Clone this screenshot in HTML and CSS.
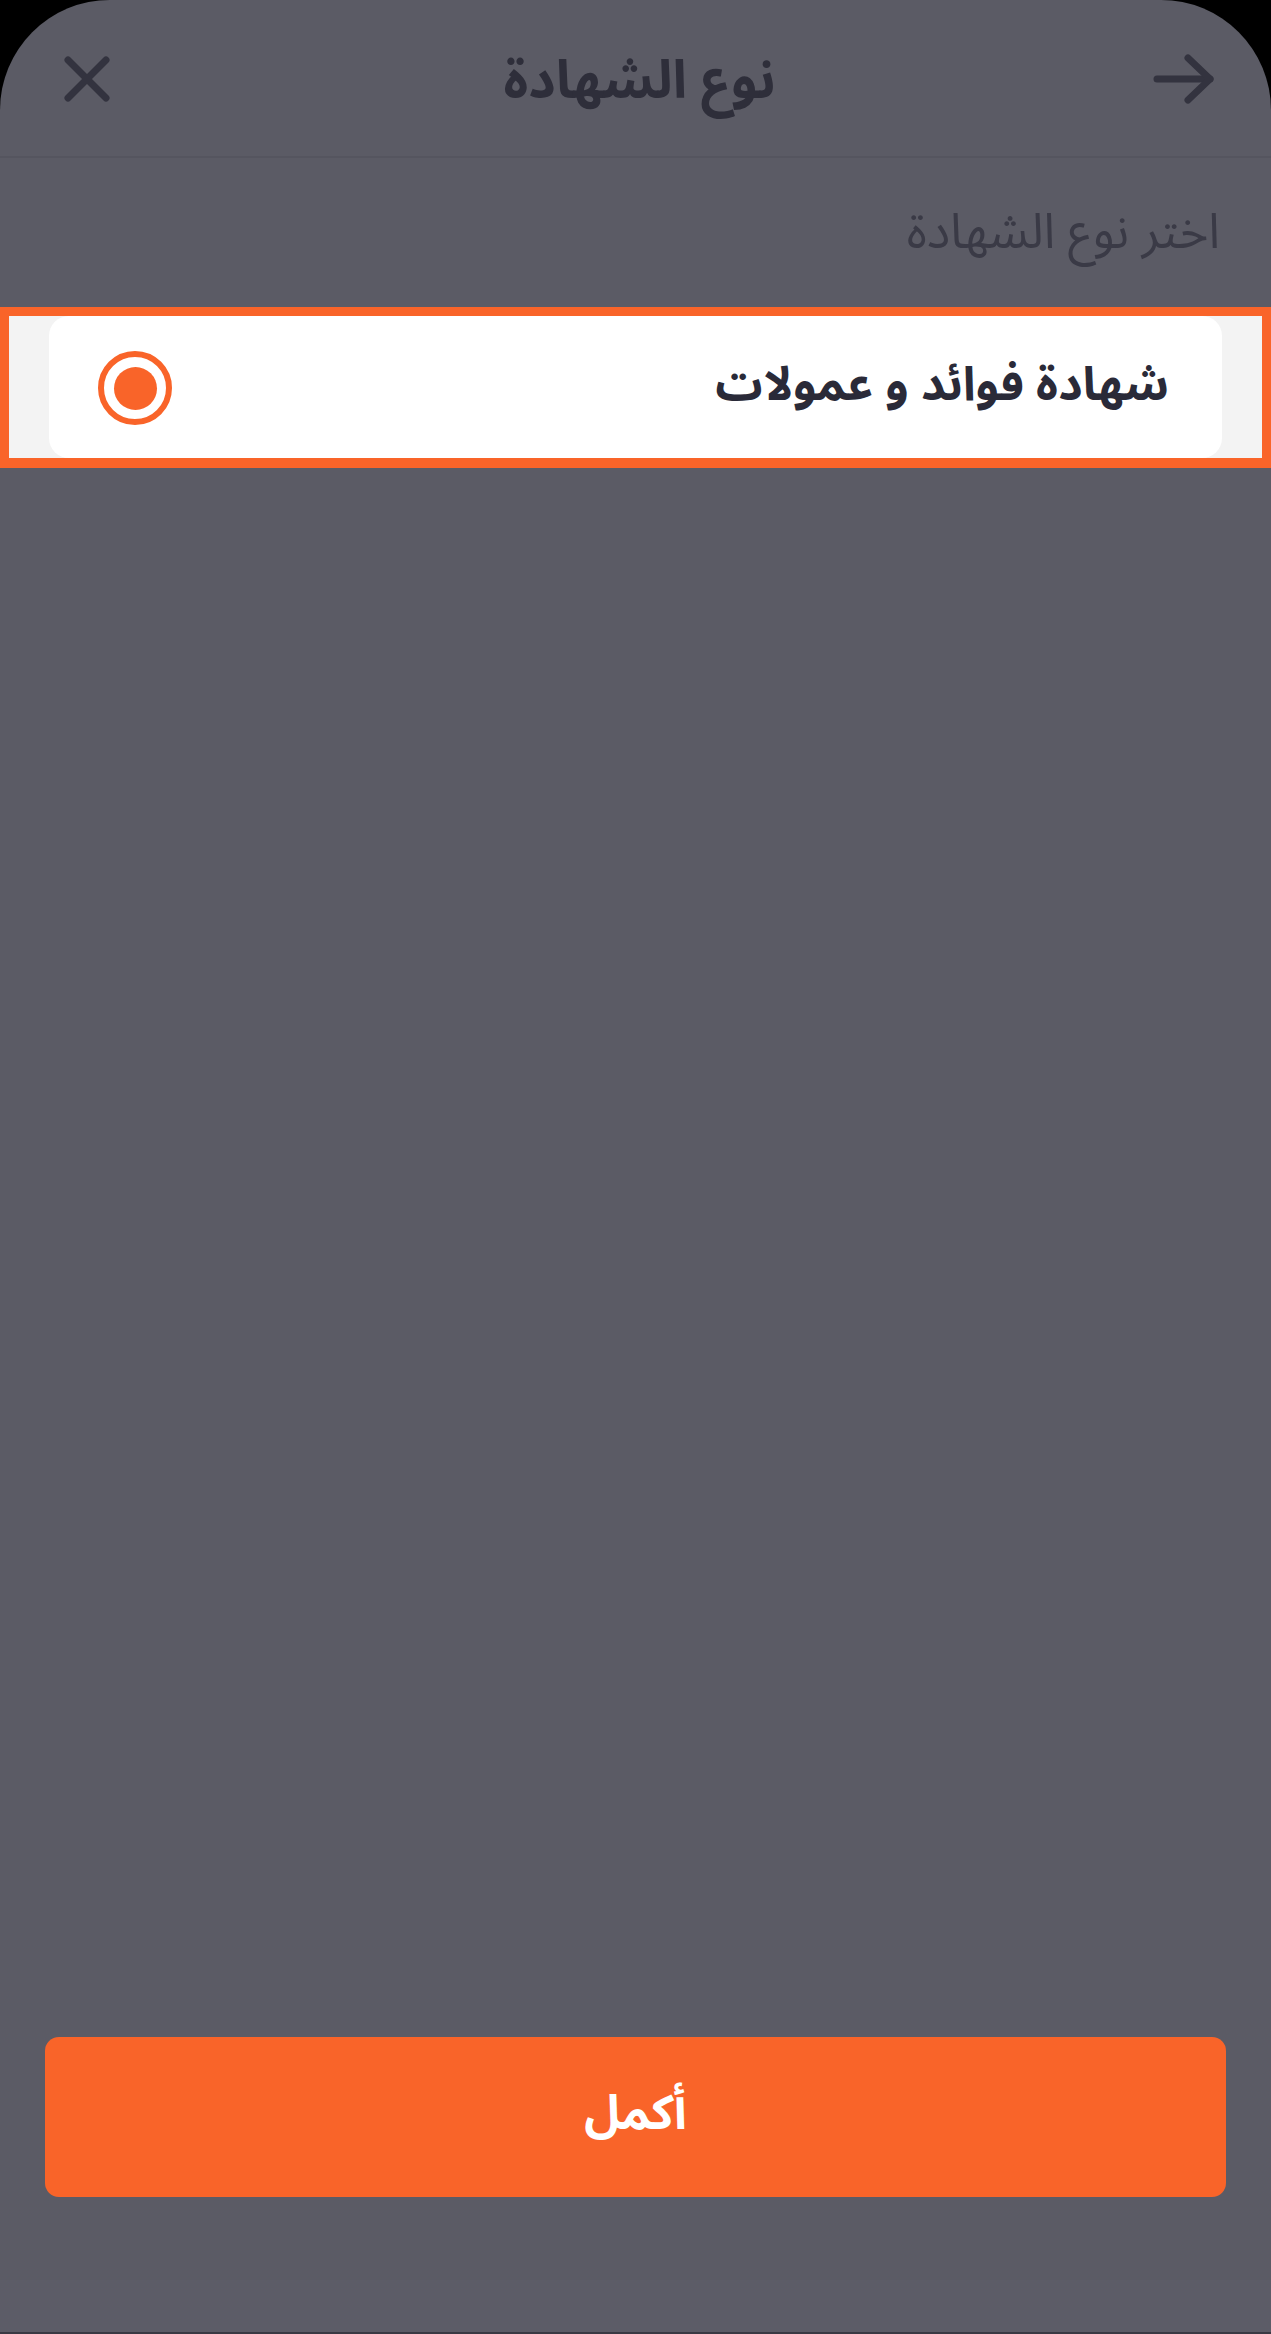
FILE: index.html
```html
<!DOCTYPE html>
<html lang="ar" dir="rtl">
<head>
<meta charset="utf-8">
<title>نوع الشهادة</title>
<link rel="stylesheet" href="styles.css">
</head>
<body>
<div class="sheet">
  <header class="topbar">
    <button class="icon-btn back" aria-label="رجوع">
      <svg width="62" height="50" viewBox="0 0 62 50" fill="none" stroke="#33333f" stroke-width="7" stroke-linecap="round" stroke-linejoin="round">
        <path d="M4 25 H57"/>
        <path d="M35 4 L57 25 L35 46"/>
      </svg>
    </button>
    <h1 class="title">نوع الشهادة</h1>
    <button class="icon-btn close" aria-label="إغلاق">
      <svg width="46" height="46" viewBox="0 0 46 46" fill="none" stroke="#33333f" stroke-width="7" stroke-linecap="round">
        <path d="M4 4 L42 42"/>
        <path d="M42 4 L4 42"/>
      </svg>
    </button>
  </header>

  <p class="subtitle">اختر نوع الشهادة</p>

  <div class="option-frame">
    <div class="option-card">
      <span class="option-label">شهادة فوائد و عمولات</span>
      <span class="radio"><span class="radio-dot"></span></span>
    </div>
  </div>

  <div class="spacer"></div>

  <button class="primary-btn">أكمل</button>

  <div class="home-area"></div>
</div>
</body>
</html>
```

FILE: styles.css
```css
html, body {
  margin: 0;
  padding: 0;
  background: #000;
}

body {
  font-family: "Noto Sans Arabic", "DejaVu Sans", "Noto Sans", sans-serif;
}

.sheet {
  width: 1271px;
  height: 2334px;
  background: #5b5b65;
  border-radius: 110px 110px 0 0;
  display: flex;
  flex-direction: column;
  overflow: hidden;
}

.topbar {
  height: 156px;
  flex: none;
  display: grid;
  grid-template-columns: 1fr auto 1fr;
  align-items: center;
  padding: 0 56px 0 64px;
  border-bottom: 2px solid #55555f;
}

.icon-btn {
  background: none;
  border: 0;
  padding: 0;
  display: flex;
  align-items: center;
  cursor: pointer;
}

.back {
  justify-self: start;
  margin-top: 2px;
}

.close {
  justify-self: end;
  margin-top: 2px;
}

.title {
  margin: 0;
  font-size: 53px;
  font-weight: 700;
  color: #2e2e3a;
  line-height: 1;
  padding-top: 6px;
}

.subtitle {
  margin: 0;
  padding: 0 51px;
  height: 149px;
  display: flex;
  align-items: center;
  font-size: 49px;
  font-weight: 400;
  color: #3a3a46;
  line-height: 1;
}

.option-frame {
  border: 9px solid #f96429;
  border-bottom-width: 10px;
  background: #f3f3f3;
  padding: 0 40px;
}

.option-card {
  height: 142px;
  background: #ffffff;
  border-radius: 20px;
  display: flex;
  align-items: center;
  justify-content: space-between;
  padding: 0 53px 0 49px;
}

.option-label {
  font-size: 47px;
  font-weight: 700;
  color: #2a2a38;
  line-height: 1;
  padding-bottom: 4px;
}

.radio {
  width: 74px;
  height: 74px;
  box-sizing: border-box;
  border: 6px solid #f96429;
  border-radius: 50%;
  display: flex;
  align-items: center;
  justify-content: center;
  margin-top: 2px;
}

.radio-dot {
  width: 43px;
  height: 43px;
  border-radius: 50%;
  background: #f96429;
}

.spacer {
  flex: 1;
}

.primary-btn {
  flex: none;
  margin: 0 45px 83px;
  height: 160px;
  border: 0;
  border-radius: 14px;
  background: #f96429;
  color: #ffffff;
  font-family: inherit;
  font-size: 48px;
  font-weight: 700;
  line-height: 1;
  padding: 0 0 6px;
}

.home-area {
  flex: none;
  height: 54px;
  background: #5c5c67;
  border-bottom: 2px solid #3a3a44;
  box-sizing: border-box;
}
```
